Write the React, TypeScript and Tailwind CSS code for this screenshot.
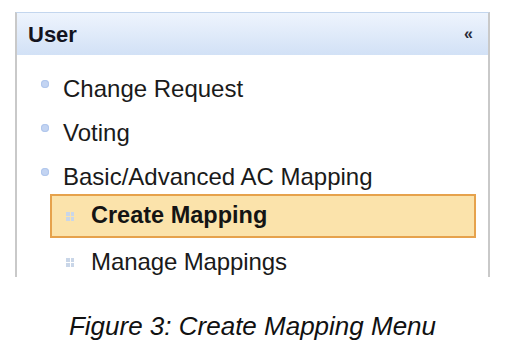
import React from "react";

const topItems = ["Change Request", "Voting", "Basic/Advanced AC Mapping"];

function Bullet() {
  return (
    <span className="mt-[13px] h-[8px] w-[8px] shrink-0 rounded-full bg-[#c3d4f2] shadow-[inset_0_0_0_1px_#b0c6ec]" />
  );
}

function GridIcon() {
  return (
    <span className="grid h-[9px] w-[8px] shrink-0 grid-cols-2 gap-[1px]">
      <span className="bg-[#c9d6e8]" />
      <span className="bg-[#c9d6e8]" />
      <span className="bg-[#c9d6e8]" />
      <span className="bg-[#c9d6e8]" />
    </span>
  );
}

export default function App() {
  return (
    <div className="h-[353px] w-[513px] overflow-hidden bg-white font-['Liberation_Sans',Arial,sans-serif] text-[#1a1a1a]">
      <div className="ml-[15px] mt-[12px] h-[265px] w-[475px] overflow-hidden border-l-2 border-r-2 border-t border-l-[#c9c9c9] border-r-[#c9c9c9] border-t-[#c3d6ee]">
        <div className="flex h-[42px] items-center justify-between bg-linear-to-b from-[#eef4fd] to-[#d2e1f6] pl-[11px] pr-[15px]">
          <span className="text-[22px] font-bold text-[#141420]">User</span>
          <span className="text-[16px] font-bold leading-none text-[#2a2a38]">«</span>
        </div>

        <div className="pt-[12px]">
          {topItems.map((item, i) => (
            <div
              key={item}
              className={`flex gap-[14px] pl-[24px] ${i === 2 ? "h-[39px]" : "h-[44px]"}`}
            >
              <Bullet />
              <span className="text-[24px] leading-[44px]">{item}</span>
            </div>
          ))}

          <div className="ml-[33px] mr-[12px] flex h-[44px] items-center gap-[17px] border-2 border-[#e6a24c] bg-[#fbe3ab] pl-[14px]">
            <GridIcon />
            <span className="text-[23.5px] font-bold leading-none text-[#141414]">Create Mapping</span>
          </div>

          <div className="ml-[33px] mt-[2px] flex h-[44px] items-center gap-[17px] pl-[16px]">
            <GridIcon />
            <span className="text-[24px] leading-none tracking-[-0.1px]">Manage Mappings</span>
          </div>
        </div>
      </div>

      <p className="ml-[15px] mt-[34px] w-[475px] text-center text-[26px] italic leading-[30px] text-[#111]">
        Figure 3: Create Mapping Menu
      </p>
    </div>
  );
}
